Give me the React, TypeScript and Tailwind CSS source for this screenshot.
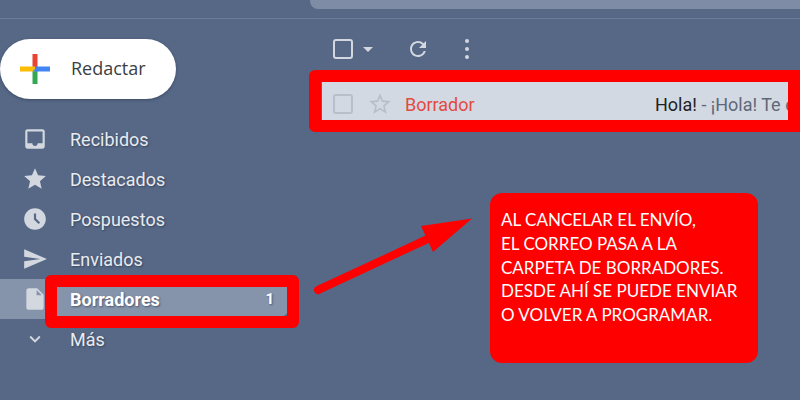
import React from "react";

const P = {
  inbox: "M19 3H5c-1.1 0-2 .9-2 2v14c0 1.1.9 2 2 2h14c1.1 0 2-.9 2-2V5c0-1.1-.9-2-2-2zm0 13h-4.5c0 1.38-1.12 2.5-2.5 2.5S9.500 17.380 9.500 16H5V5h14v11z",
  star: "M12 17.27L18.18 21l-1.64-7.03L22 9.24l-7.19-.61L12 2 9.19 8.63 2 9.24l5.46 4.73L5.820 21z",
  clock: "M11.99 2C6.47 2 2 6.48 2 12s4.47 10 9.99 10C17.52 22 22 17.52 22 12S17.52 2 11.99 2zm3.3 14.71L11 12.41V7h2v4.59l3.71 3.71-1.42 1.41z",
  send: "M2.010 21L23 12 2.010 3 2 10l15 2-15 2z",
  draft: "M14 2H6c-1.1 0-1.990.9-1.990 2L4 20c0 1.100.890 2 1.990 2H18c1.100 0 2-.9 2-2V8l-6-6zm-.5 1.800L18.200 8.500H13.500z",
  more: "M7.410 8.590L12 13.170l4.590-4.580L18 10l-6 6-6-6z",
};

function Icon({ d, size = 26 }: { d: string; size?: number }) {
  return (
    <svg width={size} height={size} viewBox="0 0 24 24" fill="#d2d7e0" fillRule="evenodd">
      <path d={d} />
    </svg>
  );
}

const items = [
  { label: "Recibidos", d: P.inbox },
  { label: "Destacados", d: P.star },
  { label: "Pospuestos", d: P.clock },
  { label: "Enviados", d: P.send },
  { label: "Borradores", d: P.draft, active: true, count: "1" },
  { label: "Más", d: P.more, small: true },
];

export default function App() {
  return (
    <div className="relative w-[800px] h-[400px] overflow-hidden bg-[#566886] font-['Roboto',sans-serif]">
      {/* header */}
      <div className="h-[19px] border-b border-[#6b7b97] pl-[310px]">
        <div className="h-[9px] bg-[#7f8ca6] rounded-bl-[8px]" />
      </div>

      <div className="flex">
        {/* sidebar */}
        <aside className="w-[310px] shrink-0 pt-[20px]">
          <button className="w-[176px] h-[60px] rounded-[30px] bg-white flex items-center pl-[20px] gap-[21px] shadow-[0_1px_3px_rgba(30,40,60,0.45)]">
            <svg width="30" height="30" viewBox="0 0 30 30">
              <rect x="12.500" y="0" width="5" height="15" fill="#ea4335" />
              <rect x="12.500" y="15" width="5" height="15" fill="#34a853" />
              <rect x="0" y="12.500" width="15" height="5" fill="#fbbc04" />
              <rect x="15" y="12.500" width="15" height="5" fill="#4285f4" />
              <path d="M12.500 17.500 L17.500 12.500 L17.500 17.500 Z" fill="#4285f4" />
            </svg>
            <span className="font-['Open_Sans',sans-serif] text-[18px] pb-[2px] text-[#3c4043]">Redactar</span>
          </button>

          <nav className="mt-[20px]">
            {items.map((it) => (
              <div
                key={it.label}
                className={
                  "h-[40px] flex items-center pl-[22px] rounded-r-[20px] w-[293px] " +
                  (it.active ? "bg-[#8593ab]" : "")
                }
              >
                <span className="w-[26px] flex justify-center shrink-0">
                  <Icon d={it.d} size={it.small ? 22 : 26} />
                </span>
                <span
                  className={
                    "ml-[22px] text-[18px] [text-shadow:1px_1px_2px_rgba(30,40,60,0.55)] " +
                    (it.active ? "font-bold text-white" : "font-normal text-[#e8ebf0]")
                  }
                >
                  {it.label}
                </span>
                {it.count && (
                  <span className="ml-auto mr-[19px] text-[15px] font-bold text-white [text-shadow:1px_1px_2px_rgba(30,40,60,0.55)]">
                    {it.count}
                  </span>
                )}
              </div>
            ))}
          </nav>
        </aside>

        {/* main */}
        <main className="flex-1 min-w-0 pl-[12px] pr-[12px]">
          <div className="h-[62px] flex items-center pl-[11px] pb-[2px]">
            <span className="w-[20px] h-[20px] border-[2.500px] border-[#d2d7e0] rounded-[3px] shrink-0" />
            <svg width="10" height="5" viewBox="0 0 10 5" className="ml-[10px]">
              <path d="M0 0h10L5 5z" fill="#d2d7e0" />
            </svg>
            <svg width="24" height="24" viewBox="0 0 24 24" className="ml-[33px]" fill="#d2d7e0">
              <path d="M17.650 6.350A7.958 7.958 0 0 0 12 4c-4.420 0-7.990 3.580-7.990 8s3.570 8 7.990 8c3.730 0 6.840-2.550 7.730-6h-2.080A5.990 5.990 0 0 1 12 18c-3.310 0-6-2.690-6-6s2.690-6 6-6c1.660 0 3.140.69 4.220 1.780L13 11h7V4l-2.350 2.350z" />
            </svg>
            <span className="ml-[35px] flex flex-col gap-[4px]">
              <span className="w-[4px] h-[4px] rounded-full bg-[#d2d7e0]" />
              <span className="w-[4px] h-[4px] rounded-full bg-[#d2d7e0]" />
              <span className="w-[4px] h-[4px] rounded-full bg-[#d2d7e0]" />
            </span>
          </div>

          <div className="h-[46px] bg-[#d2d9e2] flex items-center pl-[11px] overflow-hidden whitespace-nowrap text-[18px]">
            <span className="w-[20px] h-[20px] border-[2.500px] border-[#b9bfca] rounded-[3px] shrink-0" />
            <svg width="26" height="26" viewBox="0 0 24 24" fill="#b9bfca" className="ml-[14px] shrink-0">
              <path d="M22 9.240l-7.190-.62L12 2 9.190 8.630 2 9.240l5.460 4.730L5.820 21 12 17.270 18.180 21l-1.630-7.030L22 9.240zM12 15.400l-3.760 2.270 1-4.280-3.320-2.880 4.380-.38L12 6.100l1.710 4.040 4.380.38-3.320 2.880 1 4.280L12 15.400z" />
            </svg>
            <span className="ml-[12px] w-[250px] shrink-0 text-[#e5493f]">Borrador</span>
            <span className="text-[#202124]">Hola!</span>
            <span className="text-[#5f6878]">&nbsp;- ¡Hola! Te e</span>
          </div>
        </main>
      </div>

      {/* annotations */}
      <div className="absolute left-[45px] top-[275px] w-[254px] h-[53px] border-[12px] border-[#ff0000] rounded-[6px]" />
      <div className="absolute left-[309px] top-[70px] w-[500px] h-[62px] border-[12px] border-[#ff0000] rounded-[6px] [border-right-width:21px]" />
      <svg className="absolute left-0 top-0" width="800" height="400" viewBox="0 0 800 400">
        <line x1="318" y1="290" x2="432" y2="237" stroke="#ff0000" strokeWidth="8" strokeLinecap="round" />
        <path d="M472 218.500 L421 226 L433 252 Z" fill="#ff0000" />
      </svg>
      <div className="absolute left-[490px] top-[193px] w-[268px] h-[170px] rounded-[12px] bg-[#ff0000] pl-[11px] pt-[15px] font-['Lato',sans-serif] text-[17px] leading-[23.800px] text-white whitespace-nowrap">
        AL CANCELAR EL ENVÍO,
        <br />
        EL CORREO PASA A LA
        <br />
        CARPETA DE BORRADORES.
        <br />
        DESDE AHÍ SE PUEDE ENVIAR
        <br />O VOLVER A PROGRAMAR.
      </div>
    </div>
  );
}
